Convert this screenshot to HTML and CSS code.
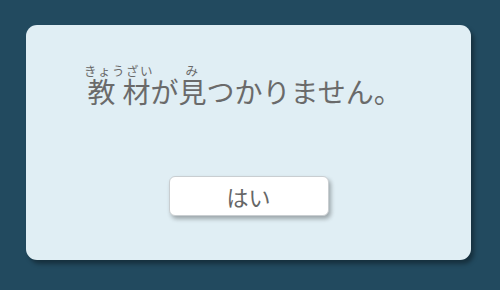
FILE: index.html
```html
<!DOCTYPE html>
<html lang="ja">
<head>
<meta charset="utf-8">
<link rel="stylesheet" href="styles.css">
</head>
<body>
<div class="dialog">
  <p class="message"><ruby>教材<rt>きょうざい</rt></ruby>が<ruby>見<rt>み</rt></ruby>つかりません。</p>
  <div class="actions">
    <button class="btn">はい</button>
  </div>
</div>
</body>
</html>
```
FILE: styles.css
```css
html, body {
  margin: 0;
  padding: 0;
}
body {
  width: 500px;
  height: 290px;
  background: #224a5f;
  font-family: "Noto Sans CJK JP", "Noto Sans", sans-serif;
  padding: 25px 0 0 26px;
  box-sizing: border-box;
}
.dialog {
  width: 445px;
  height: 235px;
  background: #e0eef4;
  border-radius: 11px;
  box-shadow: 3px 4px 4px rgba(0, 0, 0, 0.35);
  box-sizing: border-box;
  display: flex;
  flex-direction: column;
}
.message {
  margin: 40px 0 0 58px;
  font-size: 28px;
  line-height: 40px;
  color: #6a6a6a;
}
.message rt {
  font-size: 12.5px;
  line-height: 12px;
  letter-spacing: 1.5px;
  color: #6a6a6a;
}
.actions {
  display: flex;
  justify-content: center;
  margin-top: 65px;
}
.btn {
  width: 160px;
  height: 40px;
  background: #ffffff;
  border: 1px solid #c9ced1;
  border-radius: 6px;
  box-shadow: 2px 3px 4px rgba(0, 0, 0, 0.3);
  font-family: "Noto Sans CJK JP", "Noto Sans", sans-serif;
  font-size: 22px;
  color: #666666;
  padding: 0;
}
```
